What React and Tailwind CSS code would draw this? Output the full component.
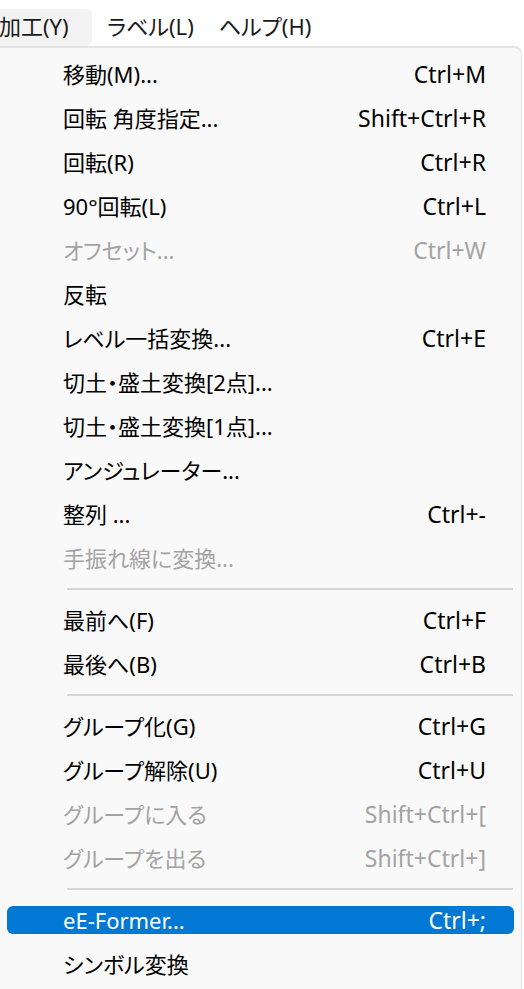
import React from "react";

const items = [
  { label: "移動(M)...", key: "Ctrl+M" },
  { label: "回転 角度指定...", key: "Shift+Ctrl+R" },
  { label: "回転(R)", key: "Ctrl+R" },
  { label: "90°回転(L)", key: "Ctrl+L" },
  { label: "オフセット...", key: "Ctrl+W", disabled: true },
  { label: "反転" },
  { label: "レベル一括変換...", key: "Ctrl+E" },
  { label: "切土・盛土変換[2点]..." },
  { label: "切土・盛土変換[1点]..." },
  { label: "アンジュレーター..." },
  { label: "整列 ...", key: "Ctrl+-" },
  { label: "手振れ線に変換...", disabled: true },
  { sep: true },
  { label: "最前へ(F)", key: "Ctrl+F" },
  { label: "最後へ(B)", key: "Ctrl+B" },
  { sep: true },
  { label: "グループ化(G)", key: "Ctrl+G" },
  { label: "グループ解除(U)", key: "Ctrl+U" },
  { label: "グループに入る", key: "Shift+Ctrl+[", disabled: true },
  { label: "グループを出る", key: "Shift+Ctrl+]", disabled: true },
  { sep: true },
  { label: "eE-Former...", key: "Ctrl+;", active: true },
  { label: "シンボル変換" },
];

const MenuRow = ({ item }) => {
  if (item.sep) {
    return (
      <div className="flex h-[18px] items-center pl-[67px] pr-[8px]">
        <div className="h-[2px] w-full bg-[#d6d6d6]" />
      </div>
    );
  }

  const color = item.active
    ? "text-white"
    : item.disabled
    ? "text-[#a3a3a3]"
    : "text-black";

  return (
    <div className="flex h-[44px] items-center px-[7px]">
      <div
        className={`flex h-[28px] w-full items-center justify-between rounded-[6px] pl-[56px] pr-[28px] ${
          item.active ? "bg-[#0078d4]" : ""
        } ${color}`}
      >
        <span>{item.label}</span>
        {item.key && <span className="text-[23px]">{item.key}</span>}
      </div>
    </div>
  );
};

const App = () => {
  return (
    <div
      className="h-[989px] w-[524px] overflow-hidden bg-white text-[22px] leading-none"
      style={{
        fontFamily: '"Noto Sans", "Noto Sans CJK JP", sans-serif',
        fontFeatureSettings: '"palt"',
      }}
    >
      <div className="flex h-[46px] items-center pt-[8px]">
        <div className="flex h-[37px] w-[92px] items-center rounded-r-[6px] bg-[#f3f3f3] pb-[2px] text-[#1a1a1a]">
          <span className="-ml-[1px]">加工(Y)</span>
        </div>
        <div className="ml-[15px] pb-[2px] text-[#1a1a1a]">ラベル(L)</div>
        <div className="ml-[25px] pb-[2px] text-[#1a1a1a]">ヘルプ(H)</div>
      </div>
      <div className="mr-[2px] rounded-tr-[8px] border-t-[2px] border-r border-[#e3e3e3] bg-[#f9f9f9] pt-[4px] pb-[20px]">
        {items.map((item, i) => (
          <MenuRow key={i} item={item} />
        ))}
      </div>
    </div>
  );
};

export default App;
